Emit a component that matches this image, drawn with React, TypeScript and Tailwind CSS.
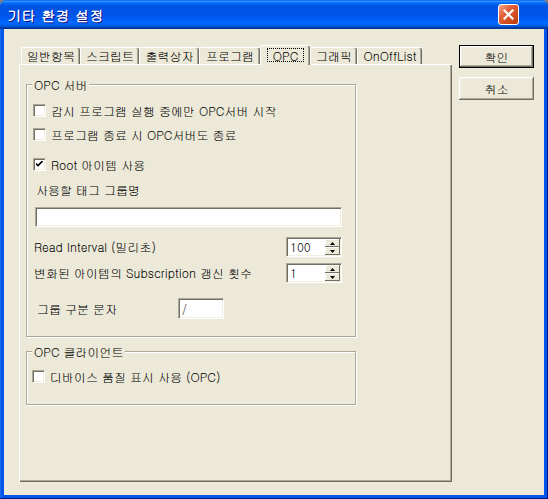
import React from 'react'

const sunken =
  'bg-white border border-t-[#ACA899] border-l-[#ACA899] border-r-white border-b-white shadow-[inset_1px_1px_#716F64,inset_-1px_-1px_#F1EFE2]'
const raised =
  'bg-[#ECE9D8] shadow-[inset_-1px_-1px_#716F64,inset_1px_1px_white,inset_-2px_-2px_#ACA899,inset_2px_2px_#F1EFE2]'

function CheckBox({ checked }: { checked?: boolean }) {
  return (
    <span className={`w-[13px] h-[13px] shrink-0 flex items-center justify-center ${sunken}`}>
      {checked && (
        <svg width="7" height="7" viewBox="0 0 7 7">
          <path d="M0 2.5 L2 4.5 L6.5 0" stroke="black" strokeWidth="1.6" fill="none" />
        </svg>
      )}
    </span>
  )
}

function CheckRow({ label, checked, className }: { label: string; checked?: boolean; className?: string }) {
  return (
    <div className={`flex items-center h-[13px] ${className ?? ''}`}>
      <CheckBox checked={checked} />
      <span className="ml-[5px] leading-[14px] whitespace-nowrap">{label}</span>
    </div>
  )
}

function SpinArrow({ up }: { up?: boolean }) {
  return (
    <div className="w-[15px] h-[8px] flex items-center justify-center bg-[#ECE9D8] shadow-[inset_-1px_-1px_#716F64,inset_1px_1px_white]">
      <svg width="5" height="3" viewBox="0 0 5 3">
        <path d={up ? 'M2.5 0 L5 3 L0 3 Z' : 'M0 0 L5 0 L2.5 3 Z'} fill="black" />
      </svg>
    </div>
  )
}

function Spin({ value }: { value: string }) {
  return (
    <div className={`w-[56px] h-[20px] flex items-center ${sunken}`}>
      <span className="flex-1 pl-[3px] leading-[14px]">{value}</span>
      <div className="flex flex-col mr-[1px]">
        <SpinArrow up />
        <SpinArrow />
      </div>
    </div>
  )
}

function Group({ title, className, children }: { title: string; className?: string; children: React.ReactNode }) {
  return (
    <div
      className={`w-[330px] border border-[#ACA899] shadow-[inset_1px_1px_white,1px_1px_white] ${className ?? ''}`}
    >
      <div className="-mt-[7px] ml-[5px] h-[14px] w-fit px-[2px] bg-[#ECE9D8] leading-[14px] whitespace-nowrap">
        {title}
      </div>
      {children}
    </div>
  )
}

const tabs = [
  { label: '일반항목', w: 'w-[59px]' },
  { label: '스크립트', w: 'w-[59px]' },
  { label: '출력상자', w: 'w-[60px]' },
  { label: '프로그램', w: 'w-[61px]' },
  { label: 'OPC', w: 'w-[50px]', active: true },
  { label: '그래픽', w: 'w-[47px]' },
  { label: 'OnOffList', w: 'w-[65px]' },
]

export default function App() {
  return (
    <div className="w-[548px] h-[499px] bg-[#7F7F7F] font-['Gulim','Noto_Sans_CJK_KR',sans-serif] text-[12px] text-black">
      <div className="w-full h-full flex flex-col rounded-t-[7px] bg-[#0055EA] shadow-[inset_-1px_-1px_#00138C,inset_1px_1px_#166AEE] overflow-hidden">
        {/* Title bar */}
        <div className="h-[29px] shrink-0 flex items-center px-[7px] bg-[linear-gradient(180deg,#0058EE_0%,#3593FF_4%,#288EFF_6%,#127DFF_8%,#036FFC_10%,#0262EE_14%,#0057E5_20%,#0054E3_24%,#0055EB_56%,#005BF5_66%,#026AFE_76%,#0062EF_86%,#0052D6_92%,#0040AB_94%,#003092_100%)]">
          <span className="text-white font-bold text-[14px] leading-none [text-shadow:1px_1px_#0F1089] tracking-[0.5px]">
            기타 환경 설정
          </span>
          <div className="ml-auto mr-[22px] w-[21px] h-[21px] rounded-[3px] border border-white flex items-center justify-center bg-[linear-gradient(135deg,#F4A78A_0%,#E4643C_35%,#D04A1E_70%,#B8380F_100%)]">
            <svg width="11" height="11" viewBox="0 0 11 11">
              <path d="M1.5 1.5 L9.5 9.5 M9.5 1.5 L1.5 9.5" stroke="white" strokeWidth="2.2" strokeLinecap="square" />
            </svg>
          </div>
        </div>

        {/* Client */}
        <div className="flex-1 mx-[4px] mb-[4px] bg-[#ECE9D8] flex pt-[16px] pl-[15px]">
          {/* Tab control */}
          <div className="w-[433px] flex flex-col">
            <div className="h-[19px] flex items-end pl-[2px]">
              {tabs.map(t =>
                t.active ? (
                  <div
                    key={t.label}
                    className={`${t.w} h-[20px] -mb-[1px] relative z-10 bg-[#ECE9D8] rounded-t-[2px] border-t border-l border-white shadow-[inset_-1px_0_#716F64,inset_-2px_0_#ACA899] flex items-start justify-center pt-[1px]`}
                  >
                    <span className="mt-[1px] px-[5px] h-[14px] leading-[13px] border border-dotted border-black">
                      {t.label}
                    </span>
                  </div>
                ) : (
                  <div
                    key={t.label}
                    className={`${t.w} h-[17px] rounded-t-[2px] border-t border-l border-white shadow-[inset_-1px_0_#716F64,inset_-2px_0_#ACA899] flex items-center justify-center leading-[14px] whitespace-nowrap`}
                  >
                    {t.label}
                  </div>
                ),
              )}
            </div>

            <div className="h-[418px] pl-[7px] pt-[20px] shadow-[inset_1px_1px_white,inset_-1px_-1px_#716F64,inset_-2px_-2px_#ACA899]">
              <Group title="OPC 서버" className="h-[253px]">
                <div className="pl-[6px]">
                  <CheckRow className="mt-[12px]" label="감시 프로그램 실행 중에만 OPC서버 시작" />
                  <CheckRow className="mt-[11px]" label="프로그램 종료 시 OPC서버도 종료" />
                  <CheckRow className="mt-[17px]" label="Root 아이템 사용" checked />
                </div>
                <div className="mt-[12px] ml-[9px] leading-[14px]">사용할 태그 그룹명</div>
                <div className={`mt-[10px] ml-[8px] w-[307px] h-[20px] ${sunken}`} />
                <div className="mt-[10px] ml-[7px] mr-[13px] h-[20px] flex items-center justify-between">
                  <span className="whitespace-nowrap">Read Interval (밀리초)</span>
                  <Spin value="100" />
                </div>
                <div className="mt-[6px] ml-[7px] mr-[13px] h-[20px] flex items-center justify-between">
                  <span className="whitespace-nowrap">변화된 아이템의 Subscription 갱신 횟수</span>
                  <Spin value="1" />
                </div>
                <div className="mt-[15px] ml-[10px] h-[21px] flex items-center">
                  <span className="w-[141px] whitespace-nowrap">그룹 구분 문자</span>
                  <div className={`w-[46px] h-[21px] flex items-center pl-[3px] ${sunken}`}>/</div>
                </div>
              </Group>

              <Group title="OPC 클라이언트" className="mt-[14px] h-[54px]">
                <div className="pl-[5px]">
                  <CheckRow className="mt-[11px]" label="디바이스 품질 표시 사용 (OPC)" />
                </div>
              </Group>
            </div>
          </div>

          {/* Buttons */}
          <div className="ml-[7px] flex flex-col gap-[9px]">
            <div className="w-[75px] h-[23px] border border-black">
              <div className={`w-full h-full flex items-center justify-center ${raised}`}>확인</div>
            </div>
            <div className={`w-[75px] h-[23px] flex items-center justify-center ${raised}`}>취소</div>
          </div>
        </div>
      </div>
    </div>
  )
}
